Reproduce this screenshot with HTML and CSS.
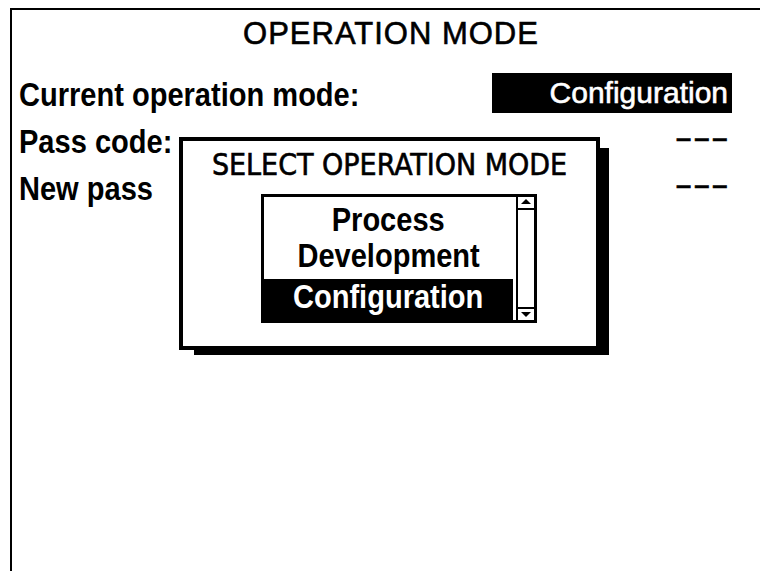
FILE: index.html
```html
<!DOCTYPE html>
<html lang="en">

<head>
  <meta charset="UTF-8">
  <title>Operation Mode</title>
  <link rel="stylesheet" href="styles.css">
</head>

<body>

  <div class="screen">
    <h1 class="title">OPERATION MODE</h1>

    <div class="fields">
      <div class="row">
        <span class="label">Current operation mode:</span>
        <span class="value">Configuration</span>
      </div>
      <div class="row">
        <span class="label">Pass code:</span>
        <span class="dashes">---</span>
      </div>
      <div class="row">
        <span class="label">New pass</span>
        <span class="dashes">---</span>
      </div>
    </div>

    <div class="dialog">
      <div class="dialog-title">SELECT OPERATION MODE</div>
      <div class="listbox">
        <ul class="items">
          <li><span>Process</span></li>
          <li><span>Development</span></li>
          <li class="selected"><span>Configuration</span></li>
        </ul>
        <div class="scrollbar">
          <div class="scroll-btn up"></div>
          <div class="scroll-track"></div>
          <div class="scroll-btn down"></div>
        </div>
      </div>
    </div>
  </div>

</body>

</html>
```

FILE: styles.css
```css
body {
  margin: 0;
  background: #ffffff;
  color: #000000;
  font-family: 'Liberation Sans', Arial, sans-serif;
  overflow: hidden;
}

.screen {
  position: relative;
  width: 758px;
  height: 553px;
  margin: 8px 0 0 10px;
  padding-top: 8px;
  border-top: 2px solid #000;
  border-left: 2px solid #000;
}

.title {
  margin: 0;
  font-size: 31px;
  font-weight: normal;
  line-height: 32px;
  letter-spacing: 1px;
  text-align: center;
  -webkit-text-stroke: 0.6px #000;
}

.fields {
  margin-top: 20px;
}

.row {
  display: flex;
  justify-content: space-between;
  align-items: flex-start;
  height: 47px;
  padding: 0 38px 0 7px;
}

.label {
  display: inline-block;
  font-size: 33px;
  font-weight: bold;
  line-height: 49px;
  white-space: nowrap;
  transform: scaleX(0.88);
  transform-origin: left center;
}

.value {
  box-sizing: border-box;
  width: 240px;
  height: 40px;
  margin-top: 3px;
  padding-right: 4px;
  background: #000;
  color: #fff;
  font-size: 30px;
  line-height: 40px;
  text-align: right;
  -webkit-text-stroke: 0.6px #fff;
}

.dashes {
  display: inline-block;
  margin-right: 3px;
  font-size: 33px;
  line-height: 49px;
  transform: translateY(-4px) scaleX(1.65);
  transform-origin: right center;
  -webkit-text-stroke: 0.5px #000;
}

/* popup */
.dialog {
  position: absolute;
  left: 167px;
  top: 127px;
  box-sizing: border-box;
  width: 421px;
  height: 213px;
  border: 4px solid #000;
  background: #fff;
  box-shadow: 12px 8px 0 -3px #000;
}

.dialog-title {
  padding-top: 8px;
  font-family: 'DejaVu Sans Condensed', 'DejaVu Sans', sans-serif;
  font-stretch: condensed;
  font-size: 30px;
  line-height: 32px;
  text-align: center;
  -webkit-text-stroke: 0.6px #000;
}

.listbox {
  display: flex;
  box-sizing: border-box;
  width: 276px;
  height: 129px;
  margin: 13px 0 0 78px;
  border: 3px solid #000;
}

.items {
  flex: 1;
  margin: 0;
  padding: 5px 3px 0 0;
  list-style: none;
  font-size: 33px;
  font-weight: bold;
}

.items li {
  line-height: 36px;
  text-align: center;
}

.items li span {
  display: inline-block;
  white-space: nowrap;
  transform: scaleX(0.88);
}

.items li.selected {
  margin-top: 5px;
  padding-bottom: 5px;
  background: #000;
  color: #fff;
}

.scrollbar {
  display: flex;
  flex-direction: column;
  box-sizing: border-box;
  width: 18px;
  border-left: 2px solid #000;
}

.scroll-btn {
  box-sizing: border-box;
  height: 13px;
}

.scroll-btn::before {
  content: '';
  display: block;
  width: 0;
  height: 0;
  margin: 0 auto;
  border-left: 5px solid transparent;
  border-right: 5px solid transparent;
}

.scroll-btn.up {
  border-bottom: 2px solid #000;
}

.scroll-btn.up::before {
  margin-top: 2px;
  border-bottom: 5px solid #000;
}

.scroll-btn.down {
  border-top: 2px solid #000;
}

.scroll-btn.down::before {
  margin-top: 3px;
  border-top: 5px solid #000;
}

.scroll-track {
  flex: 1;
}
```
